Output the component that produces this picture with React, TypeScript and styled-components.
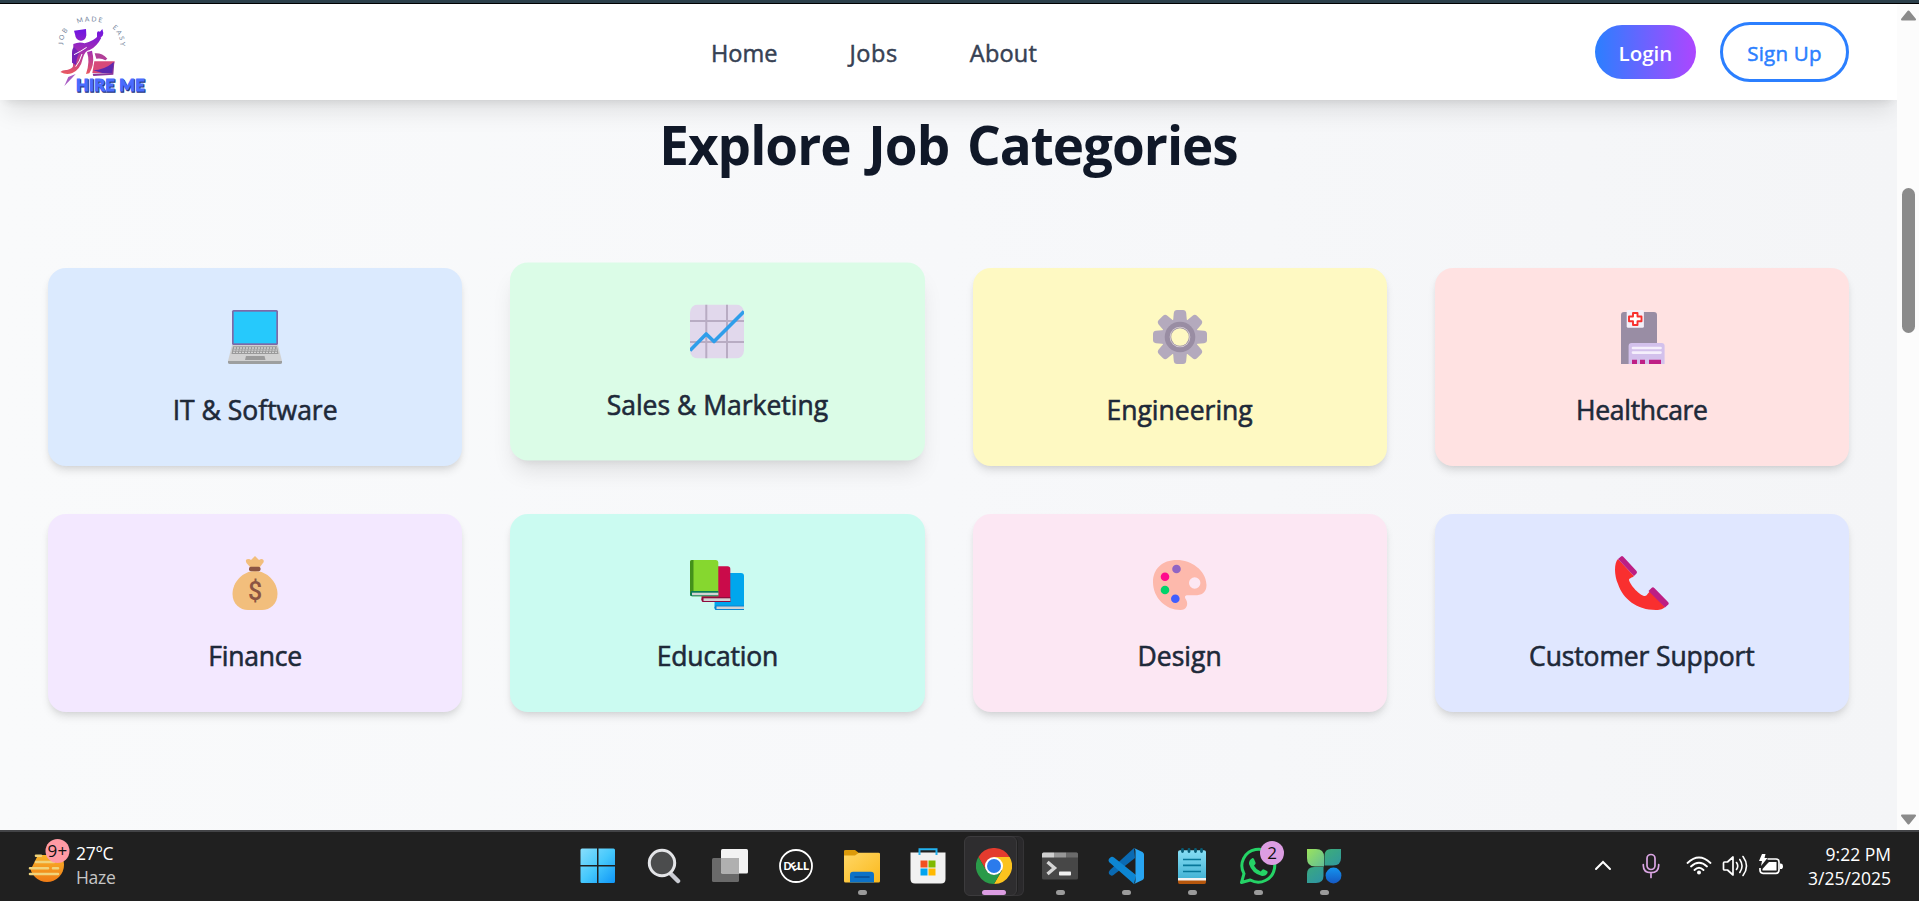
import React from "react";
import styled, { createGlobalStyle, css } from "styled-components";

const GlobalStyle = createGlobalStyle`
  * { box-sizing: border-box; }
  body { margin: 0; overflow: hidden; background: #202020; }
  svg { display: block; flex: none; }
`;

const Screen = styled.div`
  width: 1919px;
  height: 901px;
  display: flex;
  flex-direction: column;
  overflow: hidden;
  font-family: "Open Sans", "Noto Sans", sans-serif;
`;

const WindowEdge = styled.div`
  flex: none;
  height: 4px;
  background: #2b3f4a;
  border-bottom: 1px solid #000;
`;

const Viewport = styled.div`
  flex: none;
  height: 826px;
  display: flex;
`;

const Page = styled.div`
  width: 1897px;
  display: flex;
  flex-direction: column;
  overflow: hidden;
  background: linear-gradient(to right, #f9fafb, #f7f8fa 50%, #f4f5f7);
`;

const Navbar = styled.header`
  flex: none;
  height: 96px;
  padding: 0 48px;
  display: flex;
  align-items: center;
  justify-content: space-between;
  background: #fff;
  box-shadow: 0 15px 22.5px -4.5px rgba(0, 0, 0, 0.1), 0 6px 9px -6px rgba(0, 0, 0, 0.1),
    0 4px 14px -5px rgba(0, 0, 0, 0.04);
`;

const NavLinks = styled.nav`
  width: 326px;
  padding-top: 2px;
  display: flex;
  justify-content: space-between;
`;

const NavLink = styled.a<{ $ls?: number }>`
  color: #364153;
  font-size: 23.5px;
  line-height: 36px;
  font-weight: 500;
  letter-spacing: ${(p) => p.$ls ?? 0}px;
  -webkit-text-stroke: 0.5px currentColor;
`;

const NavActions = styled.div`
  display: flex;
  align-items: center;
  gap: 24px;
`;

const pill = css`
  display: flex;
  align-items: center;
  justify-content: center;
  border-radius: 30px;
  font-family: inherit;
  font-size: 20.5px;
  padding: 2px 0 0;
`;

const LoginButton = styled.button`
  ${pill}
  width: 101px;
  height: 54px;
  border: 0;
  color: #fff;
  font-weight: 600;
  background: linear-gradient(to right, #2b7fff, #ad46ff);
`;

const SignUpButton = styled.button`
  ${pill}
  width: 129px;
  height: 60px;
  border: 3px solid #2b7fff;
  color: #2b7fff;
  font-weight: 500;
  -webkit-text-stroke: 0.5px currentColor;
  letter-spacing: 0.25px;
  background: #fff;
`;

const Categories = styled.section`
  padding: 15px 48px 0;
`;

const Heading = styled.h2`
  margin: 0 0 93px;
  text-align: center;
  color: #101828;
  font-size: 53px;
  line-height: 60px;
  font-weight: 700;
  letter-spacing: -1px;
  word-spacing: 5px;
`;

const CardGrid = styled.div`
  display: grid;
  grid-template-columns: repeat(4, 1fr);
  gap: 48px;
`;

const Card = styled.article<{ $bg: string; $raised?: boolean }>`
  height: 198px;
  padding: 42px 36px 30px;
  display: flex;
  flex-direction: column;
  align-items: center;
  gap: 25px;
  border-radius: 18px;
  background: ${(p) => p.$bg};
  box-shadow: 0 6px 9px -1.5px rgba(0, 0, 0, 0.1), 0 3px 6px -3px rgba(0, 0, 0, 0.1);
  ${(p) =>
    p.$raised &&
    css`
      transform: translateY(-5.5px);
      box-shadow: 0 15px 22.5px -4.5px rgba(0, 0, 0, 0.1), 0 6px 9px -6px rgba(0, 0, 0, 0.1);
    `}
`;

const CardTitle = styled.h3<{ $ls?: number }>`
  margin: 0;
  color: #1e2939;
  font-size: 26.5px;
  line-height: 42px;
  font-weight: 500;
  white-space: nowrap;
  -webkit-text-stroke: 0.6px currentColor;
  letter-spacing: ${(p) => p.$ls ?? 0}px;
`;

const Scrollbar = styled.div`
  width: 22px;
  padding: 6px 4px 5px;
  display: flex;
  flex-direction: column;
  align-items: center;
  background: #fcfcfc;
`;

const Thumb = styled.div`
  width: 13px;
  height: 145px;
  margin: 167px 0 auto;
  border-radius: 7px;
  background: #8b8b8b;
`;

const Taskbar = styled.footer`
  flex: none;
  height: 71px;
  border-top: 2px solid #434447;
  background: #202020;
  display: flex;
  color: #fff;
`;

const Weather = styled.div`
  width: 564px;
  padding: 5px 0 0 28px;
  display: flex;
  gap: 6px;
`;

const WeatherText = styled.div`
  padding-top: 4px;
  font-size: 17.5px;
  line-height: 24px;
  letter-spacing: -0.3px;
`;

const Muted = styled.div`
  color: #c6c6c6;
`;

const Apps = styled.div`
  display: flex;
`;

const TaskItem = styled.div`
  position: relative;
  width: 66px;
  height: 69px;
  display: flex;
  align-items: center;
  justify-content: center;
`;

const ActiveTile = styled.div`
  position: absolute;
  left: 4px;
  top: 4px;
  width: 53px;
  height: 60px;
  border: 1px solid #3c3b3d;
  border-radius: 6px;
  background: #2e2d2f;
  box-shadow: 2px 0 0 -1px #202020, 7px 0 0 -1px #2a292b, 7px 0 0 0 #353436;
`;

const AppIcon = styled.div`
  position: relative;
  margin: -1px 0 0 1px;
`;

const Indicator = styled.div<{ $active?: boolean }>`
  position: absolute;
  bottom: 6px;
  left: ${(p) => (p.$active ? 22 : 30)}px;
  width: ${(p) => (p.$active ? 24 : 9)}px;
  height: 5px;
  border-radius: 3px;
  background: ${(p) => (p.$active ? "#dc9de2" : "#9b9b9b")};
`;

const Tray = styled.div`
  flex: 1;
  padding: 0 28px 2px 0;
  display: flex;
  align-items: center;
  justify-content: flex-end;
  gap: 30px;
`;

const Status = styled.div`
  display: flex;
  align-items: center;
  gap: 10px;
  margin: 0 -6px 0 -4px;
`;

const Clock = styled.div`
  width: 83px;
  display: flex;
  flex-direction: column;
  align-items: flex-end;
  white-space: nowrap;
  font-size: 17.5px;
  line-height: 24px;
`;

const Logo = () => (
  <svg width="105" height="96" viewBox="24 12 315 288">
    <defs>
      <linearGradient id="fig" gradientUnits="userSpaceOnUse" x1="0" y1="85" x2="0" y2="230">
        <stop offset="0" stopColor="#6b12e6" />
        <stop offset="0.45" stopColor="#a22cb4" />
        <stop offset="1" stopColor="#f25f55" />
      </linearGradient>
      <path id="arc" d="M70 135 C64 40 241 40 241 135" />
    </defs>
    <text fontSize="20" fill="#71819a" fontFamily="Lato, sans-serif">
      <textPath href="#arc" textLength="254">JOB&#160;&#160;&#160;MADE&#160;&#160;&#160;EASY</textPath>
    </text>
    <g fill="url(#fig)">
      <path d="M102 92 L138 87 L139 106 Q136 124 121 122 Q107 121 105 103 Z" />
      <path d="M171 99 Q172 91 180 95 L187 87 Q192 99 188 107 Q178 118 171 112 Z" />
      <path d="M100 132 Q118 124 134 130 Q160 124 174 108 L184 113 Q171 139 149 150 Q134 152 128 176 Q122 207 97 219 Q80 227 61 216 Q68 209 81 210 Q96 207 99 199 Z" />
      <path d="M141 156 L156 152 L159 168 Q163 195 148 220 L138 222 Q151 184 141 156 Z" />
      <path d="M107 222 L96 234 L73 258 L85 231 Z" fill="#a85bc4" />
      <path d="M164 160 Q186 158 202 176 L196 181 Q184 173 169 176 Z" fill="#b13f98" />
      <path d="M163 184 L224 184 L216 219 L157 219 Z" fill="#d84979" />
      <path d="M216 190 L223 185 L220 224 L160 228 L158 221 L214 219 Z" fill="#8b369b" />
      <path d="M160 211 L187 219 L216 219 L221 187 Q191 211 160 211 Z" fill="#5e28ae" />
    </g>
    <path d="M96 188 L96 160 Q96 143 103 142 L118 158 Q108 173 109 196 Z" fill="#7422b7" />
    <path d="M102 164 Q123 154 140 142 M126 162 Q119 185 107 200" stroke="#fff" strokeWidth="3" fill="none" />
    <g fontFamily="Lato, sans-serif" fontWeight="900" fontSize="49">
      <text x="110" y="275" fill="#253680" textLength="206" stroke="#253680" strokeWidth="4">HIRE ME</text>
      <text x="108" y="273" fill="#4a6cff" textLength="206" stroke="#4a6cff" strokeWidth="3">HIRE ME</text>
    </g>
  </svg>
);

const Emoji = ({ children }: { children: React.ReactNode }) => (
  <svg width="54" height="54" viewBox="0 0 54 54">{children}</svg>
);

const Laptop = () => (
  <Emoji>
    <rect x="4" width="46" height="35" rx="1.5" fill="#7d69a8" />
    <rect x="5.7" y="1.7" width="42.6" height="31.6" fill="#26c9fc" />
    <path d="M4 35 H50 L54 51 H0 Z" fill="#d1d1d1" />
    <path d="M0 51 H54 V52.5 Q54 54 52 54 H2 Q0 54 0 52.5Z" fill="#9d9f9f" />
    <path d="M5 36.3 H49 L50.5 44 H3.5 Z" fill="#9a9a9a" />
    <path d="M6 38 H48.5 M5.5 40.2 H49 M5 42.4 H49.5" stroke="#d1d1d1" strokeWidth="1.3" strokeDasharray="2 1" />
    <path d="M18 46 H36.5 L37.5 50 H17 Z" fill="#9b9b9b" />
  </Emoji>
);

const ChartUp = () => (
  <Emoji>
    <rect width="54" height="54" rx="8" fill="#e1d8ec" />
    <path d="M16.3 0 V54 M37 0 V54 M0 16.5 H54 M0 37.6 H54" stroke="#b8acc3" strokeWidth="2" />
    <path d="M0 46 L16.2 29.5 L24 37 L54 7" stroke="#2f9eea" strokeWidth="3.6" fill="none" strokeLinejoin="round" />
  </Emoji>
);

const Gear = () => (
  <Emoji>
    <g fill="#b4aabd">
      {[0, 45, 90, 135].map((a) => (
        <path key={a} transform={`rotate(${a} 27 27)`} d="M20 12 L20.8 3 Q21.2 0 24 0 H30 Q32.8 0 33.2 3 L34 12 V42 L33.2 51 Q32.8 54 30 54 H24 Q21.2 54 20.8 51 L20 42Z" />
      ))}
      <circle cx="27" cy="27" r="18.5" />
    </g>
    <circle cx="27" cy="27" r="15.3" fill="#998da3" />
    <circle cx="27" cy="27" r="10.3" fill="#d9d0d5" />
    <circle cx="27" cy="27" r="9.5" fill="#998da3" />
    <circle cx="27" cy="27" r="8.8" fill="#fef9c2" />
  </Emoji>
);

const MedicalCard = () => (
  <Emoji>
    <path d="M6 54 V5 Q6 2 9 2 H39 Q42 2 42 5 V54 Z" fill="#998da4" />
    <rect x="11.7" y="0" width="17.2" height="17.7" rx="1.5" fill="#f4eff8" />
    <path d="M18 3 H22.5 V6.5 H26.5 V11.2 H22.5 V15 H18 V11.2 H14 V6.5 H18 Z" fill="#fff" stroke="#f8312f" strokeWidth="1.9" strokeLinejoin="round" />
    <path d="M13.6 54 V36 Q13.6 33 16.6 33 H46.6 Q49.6 33 49.6 36 V54 Z" fill="#d3c1ec" />
    <path d="M18 38 H45.5 M18 42.6 H45.5" stroke="#f5effc" strokeWidth="2.7" strokeLinecap="round" />
    <path d="M17 49.7 H22 V54 H17Z M25 49.7 H30 V54 H25Z M34 49.7 H46 V54 H34Z" fill="#bf1f85" />
  </Emoji>
);

const MoneyBag = () => (
  <Emoji>
    <path d="M27 15 C39 15 49.5 26 49.5 38 C49.5 48 42 54 34 54 H20 C12 54 4.5 48 4.5 38 C4.5 26 15 15 27 15Z" fill="#f2be7c" />
    <path d="M22 11 L18.5 7 Q17 4 19 3.3 Q21.5 2.5 23 4 L27 0 L31 4 Q33.5 2.5 35 3.5 Q36.5 5 35 7 L32 11 Z" fill="#f2be7c" />
    <rect x="21" y="10.7" width="11.5" height="4.5" rx="1.8" fill="#8c5543" />
    <text x="27" y="43.5" textAnchor="middle" fontFamily="Roboto, sans-serif" fontWeight="500" fontSize="25" fill="#8c5543">$</text>
  </Emoji>
);

const Books = () => (
  <Emoji>
    <path d="M25 17 H51 Q54 17 54 20 V54 H26 Q24.5 54 24.5 51Z" fill="#00a6ed" />
    <path d="M25.5 49.5 H54 V54 H26.5 Q24.5 54 24.5 51.5Z" fill="#0a84cf" />
    <path d="M26.5 50.5 H54 V53 H26.5Z" fill="#d3d3d3" />
    <path d="M12 10.3 H37.5 Q40.3 10.3 40.3 13 V46 H13.5 Q11.5 46 11.5 43.5Z" fill="#ca0b4a" />
    <path d="M12 41 H40.3 V46 H13.5 Q11.5 46 11.5 43.5Z" fill="#8e0c3d" />
    <path d="M13.5 42.3 H40.3 V45 H13.5Z" fill="#d3d3d3" />
    <path d="M2 4 H26 Q28.3 4 28.3 6.5 V40.3 H2 Q0 40.3 0 38 V6 Q0 4 2 4Z" fill="#86d72f" />
    <path d="M2 4 H3.5 V40 H2 Q0 40 0 38 V6 Q0 4 2 4Z" fill="#44911b" />
    <path d="M1 35 H28.3 V40.3 H2 Q0 40.3 0 38Z" fill="#0a7a56" />
    <path d="M2 36.7 H28.3 V39.3 H2Z" fill="#d3d3d3" />
  </Emoji>
);

const Palette = () => (
  <Emoji>
    <path fillRule="evenodd" fill="#fdb9ac" d="M24 4 C38 4 53 14 53.5 29 C53.5 37 48 39.3 42 39.3 H34.5 C31.5 39.3 31.5 41.5 33 43.5 C36 49 33 54 27.5 54 C13 54 0 42 0 26 C0 13 9 4 24 4Z M41.7 21.3 A5.7 5.7 0 1 0 41.7 32.7 A5.7 5.7 0 1 0 41.7 21.3Z" />
    <circle cx="23.5" cy="13" r="4.3" fill="#9065c4" />
    <circle cx="12" cy="20.7" r="4.3" fill="#ff0a8d" />
    <circle cx="12" cy="34" r="4.3" fill="#00d36a" />
    <circle cx="22.3" cy="42.7" r="4.3" fill="#415fff" />
  </Emoji>
);

const Phone = () => (
  <Emoji>
    <path d="M3 3 C-1 7 -1 19 3 28 C8 43 22 54 41 54 C46 54 48 53 50 51 L35.5 35 C32.5 37 32 40 30 40 C25 40 15 29 14 24 C14 22 17 22 19 20Z" fill="#f92f2f" />
    <path d="M3 3 L6 0.5 Q7 -0.5 8.3 0.7 L21.5 15 Q22.5 16.5 21.3 17.7 L19 20 Z M33.5 35 L36.5 32 Q38 30.5 39.3 32 L53 46 Q54.3 47.3 53.3 48.5 L50 51.5 Z" fill="#bd1e83" />
  </Emoji>
);

const WeatherIcon = () => (
  <svg width="42" height="48" viewBox="0 0 42 48">
    <defs>
      <linearGradient id="sun" x1="0" y1="0" x2="0" y2="1">
        <stop offset="0" stopColor="#fbc02d" />
        <stop offset="1" stopColor="#f07c16" />
      </linearGradient>
    </defs>
    <circle cx="19" cy="28" r="17" fill="url(#sun)" />
    <path d="M0 0 H42 V18 H0Z M0 18 H10 L3 32 H0Z" fill="#202020" />
    <path d="M8 18.7 H13 M8 25 H26 M2 31.2 H20 M25 31.2 H30 M2 37 H30" stroke="#f0d37b" strokeWidth="2.6" strokeLinecap="round" />
    <circle cx="29.5" cy="14" r="12" fill="#ff9aa4" />
    <text x="29.5" y="20" textAnchor="middle" fontSize="17" fill="#111" fontFamily="Open Sans, sans-serif" letterSpacing="0.3">9+</text>
  </svg>
);

const icons: Record<string, React.ReactNode> = {
  start: (
    <svg width="36" height="36" viewBox="0 0 36 36">
      <defs>
        <linearGradient id="win" gradientUnits="userSpaceOnUse" x1="0" y1="0" x2="36" y2="36">
          <stop offset="0" stopColor="#8ae0fd" /><stop offset="0.5" stopColor="#45c8fc" /><stop offset="1" stopColor="#0c93f7" />
        </linearGradient>
      </defs>
      <path d="M2 .5 H17 V17 H.5 V2 Q.5 .5 2 .5Z M18.5 .5 H33.5 Q35 .5 35 2 V17 H18.5Z M.5 18.5 H17 V35 H2 Q.5 35 .5 33.5Z M18.5 18.5 H35 V33.5 Q35 35 33.5 35 H18.5Z" fill="url(#win)" />
    </svg>
  ),
  search: (
    <svg width="36" height="36" viewBox="0 0 36 36">
      <path d="M24 25 L32 33" stroke="#c9cbd2" strokeWidth="4.5" strokeLinecap="round" />
      <circle cx="16" cy="15" r="12.7" fill="#4b4c4d" stroke="#e4e5e8" strokeWidth="3" />
    </svg>
  ),
  views: (
    <svg width="36" height="36" viewBox="0 0 36 36">
      <rect x="0" y="10" width="27" height="24" rx="1.5" fill="#6a6a6a" />
      <rect x="9" y="1" width="27" height="24.5" rx="1.5" fill="#f3f3f3" />
      <path d="M9 10 H27 V25.5 H10.5 Q9 25.5 9 24Z" fill="#b0b0b0" />
    </svg>
  ),
  dell: (
    <svg width="36" height="36" viewBox="0 0 36 36">
      <circle cx="18" cy="18" r="16" fill="none" stroke="#fff" strokeWidth="1.8" />
      <g fill="#fff" fontFamily="Lato, sans-serif" fontWeight="900" fontSize="11">
        <text x="5.5" y="22" textLength="8" lengthAdjust="spacingAndGlyphs">D</text>
        <text x="12.5" y="22.5" transform="rotate(-32 16 18)">E</text>
        <text x="19" y="22" textLength="12" lengthAdjust="spacingAndGlyphs">LL</text>
      </g>
    </svg>
  ),
  files: (
    <svg width="36" height="36" viewBox="0 0 36 36">
      <defs><linearGradient id="fold" x1="0" y1="0" x2="1" y2="1"><stop offset="0" stopColor="#ffd766" /><stop offset="1" stopColor="#fbb91c" /></linearGradient></defs>
      <path d="M0 3 Q0 2 1.5 2 H11 L15 5 H18 V14 H0Z" fill="#dc9a0a" />
      <path d="M0 7.5 H11 L15 4.7 H34.5 Q36 4.7 36 6 V33 Q36 34.5 34.5 34.5 H1.5 Q0 34.5 0 33Z" fill="url(#fold)" />
      <path d="M6 34.5 V27 Q6 23.7 9 23.7 H27 Q30 23.7 30 27 V34.5Z" fill="#0d72c8" />
      <path d="M11 29 H25" stroke="#084c93" strokeWidth="1.6" strokeLinecap="round" />
    </svg>
  ),
  store: (
    <svg width="36" height="36" viewBox="0 0 36 36">
      <path d="M.5 4.5 H35.5 V31 Q35.5 35.5 31 35.5 H5 Q.5 35.5 .5 31Z" fill="#f1f1f1" />
      <path d="M9.5 7 V1.2 H26.5 V7" fill="none" stroke="#22b2f0" strokeWidth="2" />
      <path d="M10.5 12.5 H17.5 V19.5 H10.5Z" fill="#f25022" /><path d="M18.5 12.5 H25.5 V19.5 H18.5Z" fill="#7fba00" />
      <path d="M10.5 20.5 H17.5 V27.5 H10.5Z" fill="#00a4ef" /><path d="M18.5 20.5 H25.5 V27.5 H18.5Z" fill="#ffb900" />
    </svg>
  ),
  chrome: (
    <svg width="36" height="36" viewBox="0 0 36 36">
      <path d="M18 9 H33.6 A18 18 0 0 0 2.4 9 L10.2 22.5Z" fill="#e33b2e" />
      <path d="M33.6 9 H18 L25.8 22.5 L18 36 A18 18 0 0 0 33.6 9Z" fill="#fcc31e" />
      <path d="M2.4 9 L10.2 22.5 Q18 31 25.8 22.5 L18 36 A18 18 0 0 1 2.4 9Z" fill="#2a9a49" />
      <circle cx="18" cy="18" r="9" fill="#fff" /><circle cx="18" cy="18" r="7" fill="#2b7bec" />
    </svg>
  ),
  terminal: (
    <svg width="36" height="36" viewBox="0 0 36 36">
      <rect y="4.5" width="36" height="27" rx="1.5" fill="#474747" />
      <path d="M0 9.5 V6 Q0 4.5 1.5 4.5 H12 V9.5Z" fill="#cfcfcf" /><path d="M12 4.5 H24 V9.5 H12Z" fill="#979797" /><path d="M24 4.5 H34.5 Q36 4.5 36 6 V9.5 H24Z" fill="#6a6a6a" />
      <path d="M5.5 14 L12.5 20 L5.5 26" stroke="#d5d5d5" strokeWidth="3.4" fill="none" />
      <rect x="17" y="23.5" width="12" height="4" rx=".8" fill="#f0f0f0" />
    </svg>
  ),
  code: (
    <svg width="36" height="36" viewBox="0 0 36 36">
      <path d="M26 0 L2 22 Q0 24 1 26 L3 27.5 Q4 28 5.5 27 L27 10Z" fill="#0a6ab3" />
      <path d="M26 36 L1 14 Q0 12 1 10.7 L3 9 Q4.5 8.3 6 9.5 L28 27Z" fill="#0d86d3" />
      <path d="M26 0 L34.5 4 Q36 5 36 6.5 V29.5 Q36 31 34.5 32 L26 36 Q27.5 35 27.5 33 V3 Q27.5 1 26 0Z" fill="#28a5f2" />
    </svg>
  ),
  notes: (
    <svg width="36" height="36" viewBox="0 0 36 36">
      <defs><linearGradient id="note" x1="0" y1="0" x2="0" y2="1"><stop offset="0" stopColor="#86def4" /><stop offset="1" stopColor="#46b4d6" /></linearGradient></defs>
      <path d="M4 29 H32 V34 Q32 36 30.5 36 H5.5 Q4 36 4 34Z" fill="#b5560c" />
      <path d="M4 28 H32 V32.5 H4Z" fill="#f3f3f3" />
      <path d="M4 4 Q4 2.3 6 2.3 H30 Q32 2.3 32 4 V30 H4Z" fill="url(#note)" />
      <path d="M9 11.5 H27 M9 17.3 H27 M9 23.5 H27" stroke="#077799" strokeWidth="1.7" />
      <path d="M8.5 1.5 V3.5 M15 1.5 V3.5 M21.5 1.5 V3.5 M27.5 1.5 V3.5" stroke="#075d77" strokeWidth="2.8" strokeLinecap="round" />
    </svg>
  ),
  whatsapp: (
    <svg width="52" height="50" viewBox="-8 -7 52 50">
      <path d="M1.5 34.5 L4 25.7 A16.4 16.4 0 1 1 10.3 32 Z" fill="none" stroke="#25d366" strokeWidth="3" strokeLinejoin="round" />
      <path d="M12.5 10 Q13.5 10 14 11 L15.5 14.5 Q16 15.5 15 16.5 L14 17.7 Q16.5 22 20.7 23.6 L22.3 21.7 Q23 21 24 21.5 L27 23 Q28 23.6 27.5 25 Q26 28.3 22 28 Q12 25.7 9 16 Q8.7 12 12.5 10Z" fill="#25d366" />
      <circle cx="32" cy="5" r="12" fill="#dc9de2" />
      <text x="32" y="11" textAnchor="middle" fontSize="17" fill="#111" fontFamily="Open Sans, sans-serif">2</text>
    </svg>
  ),
  leaves: (
    <svg width="36" height="36" viewBox="0 0 36 36">
      <defs>
        <linearGradient id="l1" x1="0" y1="0" x2="1" y2="1"><stop offset="0" stopColor="#9be35c" /><stop offset="1" stopColor="#62bf97" /></linearGradient>
        <linearGradient id="l2" gradientUnits="userSpaceOnUse" x1="9" y1="9" x2="27" y2="34"><stop offset="0" stopColor="#3dac7a" /><stop offset="1" stopColor="#2a8fae" /></linearGradient>
        <linearGradient id="l3" x1="0" y1="0" x2="0" y2="1"><stop offset="0" stopColor="#1493ee" /><stop offset="1" stopColor="#1559c4" /></linearGradient>
      </defs>
      <path d="M18.5 8 Q18.5 1 25 1 H35 V10 Q35 17.5 27 17.5 H18.5Z M8 19 H17.5 V28 Q17.5 35 10 35 H1 V26 Q1 19 8 19Z" fill="url(#l2)" />
      <path d="M1 1 H10 Q18 1 18 9 V18.5 H9 Q1 18.5 1 10Z" fill="url(#l1)" />
      <circle cx="27.5" cy="27.5" r="7.9" fill="url(#l3)" />
    </svg>
  ),
};

const taskApps: { id: string; open?: boolean; active?: boolean }[] = [
  { id: "start" },
  { id: "search" },
  { id: "views" },
  { id: "dell" },
  { id: "files", open: true },
  { id: "store" },
  { id: "chrome", active: true },
  { id: "terminal", open: true },
  { id: "code", open: true },
  { id: "notes", open: true },
  { id: "whatsapp", open: true },
  { id: "leaves", open: true },
];

const categories = [
  { name: "IT & Software", bg: "#dbeafe", icon: <Laptop /> },
  { name: "Sales & Marketing", bg: "#dbfce7", icon: <ChartUp />, raised: true },
  { name: "Engineering", bg: "#fef9c2", icon: <Gear /> },
  { name: "Healthcare", bg: "#ffe2e2", icon: <MedicalCard />, ls: -0.3 },
  { name: "Finance", bg: "#f3e8ff", icon: <MoneyBag />, ls: -0.2 },
  { name: "Education", bg: "#cbfbf1", icon: <Books />, ls: -0.2 },
  { name: "Design", bg: "#fce7f3", icon: <Palette /> },
  { name: "Customer Support", bg: "#e0e7ff", icon: <Phone />, ls: -0.12 },
];

export default function App() {
  return (
    <Screen>
      <GlobalStyle />
      <WindowEdge />
      <Viewport>
        <Page>
          <Navbar>
            <Logo />
            <NavLinks>
              <NavLink>Home</NavLink>
              <NavLink $ls={0.6}>Jobs</NavLink>
              <NavLink $ls={0.2}>About</NavLink>
            </NavLinks>
            <NavActions>
              <LoginButton>Login</LoginButton>
              <SignUpButton>Sign Up</SignUpButton>
            </NavActions>
          </Navbar>
          <Categories>
            <Heading>Explore Job Categories</Heading>
            <CardGrid>
              {categories.map((c) => (
                <Card key={c.name} $bg={c.bg} $raised={c.raised}>
                  {c.icon}
                  <CardTitle $ls={c.ls}>{c.name}</CardTitle>
                </Card>
              ))}
            </CardGrid>
          </Categories>
        </Page>
        <Scrollbar>
          <svg width="15" height="11" viewBox="0 0 15 11">
            <path d="M1 9.5 L7.5 1.5 L14 9.5Z" fill="#8b8b8b" stroke="#8b8b8b" strokeWidth="2" strokeLinejoin="round" />
          </svg>
          <Thumb />
          <svg width="15" height="11" viewBox="0 0 15 11">
            <path d="M1 1.5 L7.5 9.5 L14 1.5Z" fill="#8b8b8b" stroke="#8b8b8b" strokeWidth="2" strokeLinejoin="round" />
          </svg>
        </Scrollbar>
      </Viewport>
      <Taskbar>
        <Weather>
          <WeatherIcon />
          <WeatherText>
            <div>27°C</div>
            <Muted>Haze</Muted>
          </WeatherText>
        </Weather>
        <Apps>
          {taskApps.map((a) => (
            <TaskItem key={a.id}>
              {a.active && <ActiveTile />}
              <AppIcon>{icons[a.id]}</AppIcon>
              {(a.open || a.active) && <Indicator $active={a.active} />}
            </TaskItem>
          ))}
        </Apps>
        <Tray>
          <svg width="18" height="12" viewBox="0 0 18 12">
            <path d="M2 9 L9 2 L16 9" fill="none" stroke="#fff" strokeWidth="2" strokeLinecap="round" />
          </svg>
          <svg width="18" height="26" viewBox="0 0 18 26">
            <rect x="5" y="1.5" width="8" height="15" rx="4" fill="none" stroke="#dba6e4" strokeWidth="1.7" />
            <path d="M1.3 11.5 V12.5 Q1.3 19.7 9 19.7 Q16.7 19.7 16.7 12.5 V11.5 M9 19.7 V24.5" fill="none" stroke="#dba6e4" strokeWidth="1.7" strokeLinecap="round" />
          </svg>
          <Status>
            <svg width="26" height="20" viewBox="0 0 26 20">
              <path d="M1.5 7 Q13 -4 24.5 7 M5 10.5 Q13 3 21 10.5 M8.5 14 Q13 9.5 17.5 14" fill="none" stroke="#fff" strokeWidth="1.8" strokeLinecap="round" />
              <circle cx="13" cy="16.5" r="2" fill="#fff" />
            </svg>
            <svg width="26" height="22" viewBox="0 0 26 22">
              <path d="M1.5 8 Q1.5 7 2.5 7 H5.5 L11 2 V20 L5.5 15 H2.5 Q1.5 15 1.5 14Z" fill="none" stroke="#fff" strokeWidth="1.7" strokeLinejoin="round" />
              <path d="M14.5 7.5 Q17 11 14.5 14.5 M17.8 4.5 Q22.3 11 17.8 17.5 M21 1.5 Q28 11 21 20.5" fill="none" stroke="#fff" strokeWidth="1.6" strokeLinecap="round" />
            </svg>
            <svg width="26" height="24" viewBox="0 0 26 24">
              <path d="M9.5 5 H18 Q21 5 21 8 V16 Q21 19.3 18 19.3 H5 Q2 19.3 2 16 V14" fill="none" stroke="#fff" strokeWidth="1.7" />
              <path d="M11 8 H18.5 V16.5 H4.5 V15 L9 10Z" fill="#fff" />
              <path d="M22 9.5 H23 Q25 9.5 25 12.2 Q25 15 23 15 H22Z" fill="#fff" />
              <path d="M4 0 H7.5 L6.5 4 H9.5 L3 12 L4 7 H1Z" fill="#fff" />
            </svg>
          </Status>
          <Clock>
            <div>9:22 PM</div>
            <div>3/25/2025</div>
          </Clock>
        </Tray>
      </Taskbar>
    </Screen>
  );
}
